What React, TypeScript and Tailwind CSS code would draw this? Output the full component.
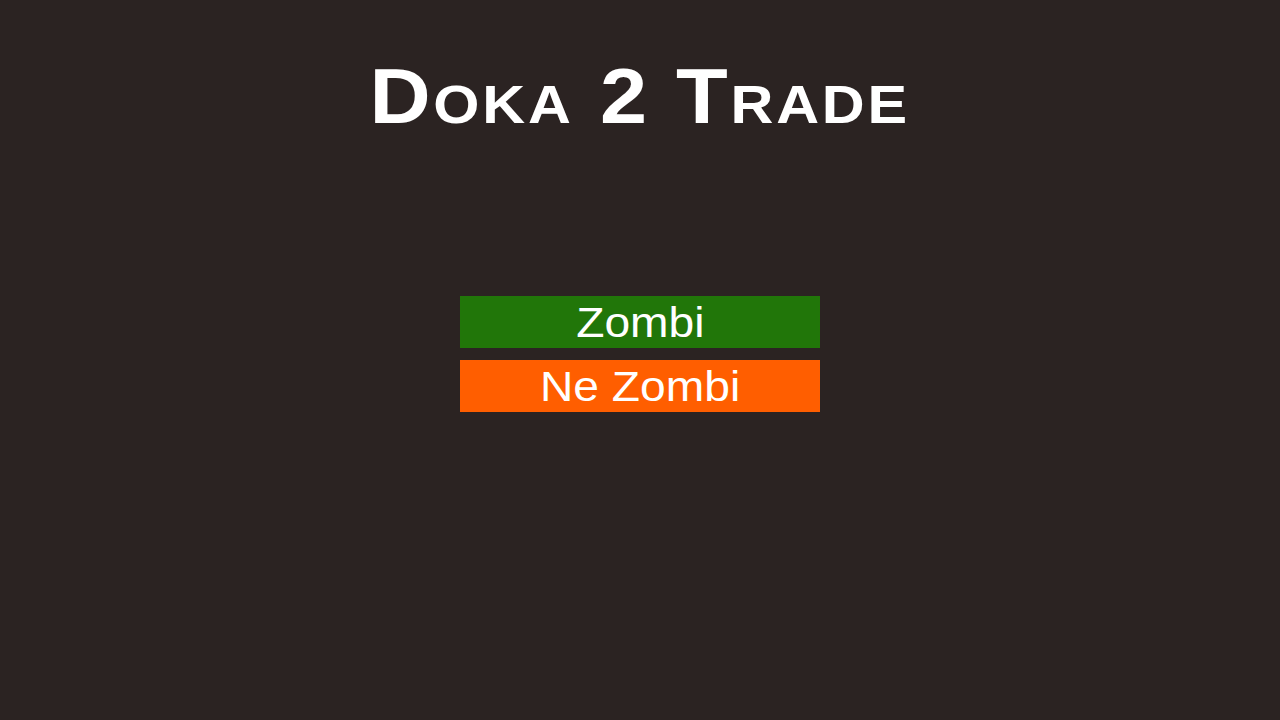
export default function App() {
  return (
    <div className="min-h-screen bg-[#2b2322] flex flex-col items-center font-['Liberation_Sans',Arial,sans-serif] text-white">
      <h1 className="mt-[58px] text-[77px] leading-none font-bold [font-variant:small-caps] scale-x-110 tracking-[2.5px]">
        Doka 2 Trade
      </h1>

      <div className="mt-[161px] flex flex-col gap-3">
        <button className="w-[360px] h-[52px] bg-[#217609] text-[42px] leading-[52px] pt-[1px] text-white">
          <span className="inline-block scale-x-110">Zombi</span>
        </button>
        <button className="w-[360px] h-[52px] bg-[#ff5e00] text-[42px] leading-[52px] pt-[1px] text-white">
          <span className="inline-block scale-x-110">Ne Zombi</span>
        </button>
      </div>
    </div>
  );
}
